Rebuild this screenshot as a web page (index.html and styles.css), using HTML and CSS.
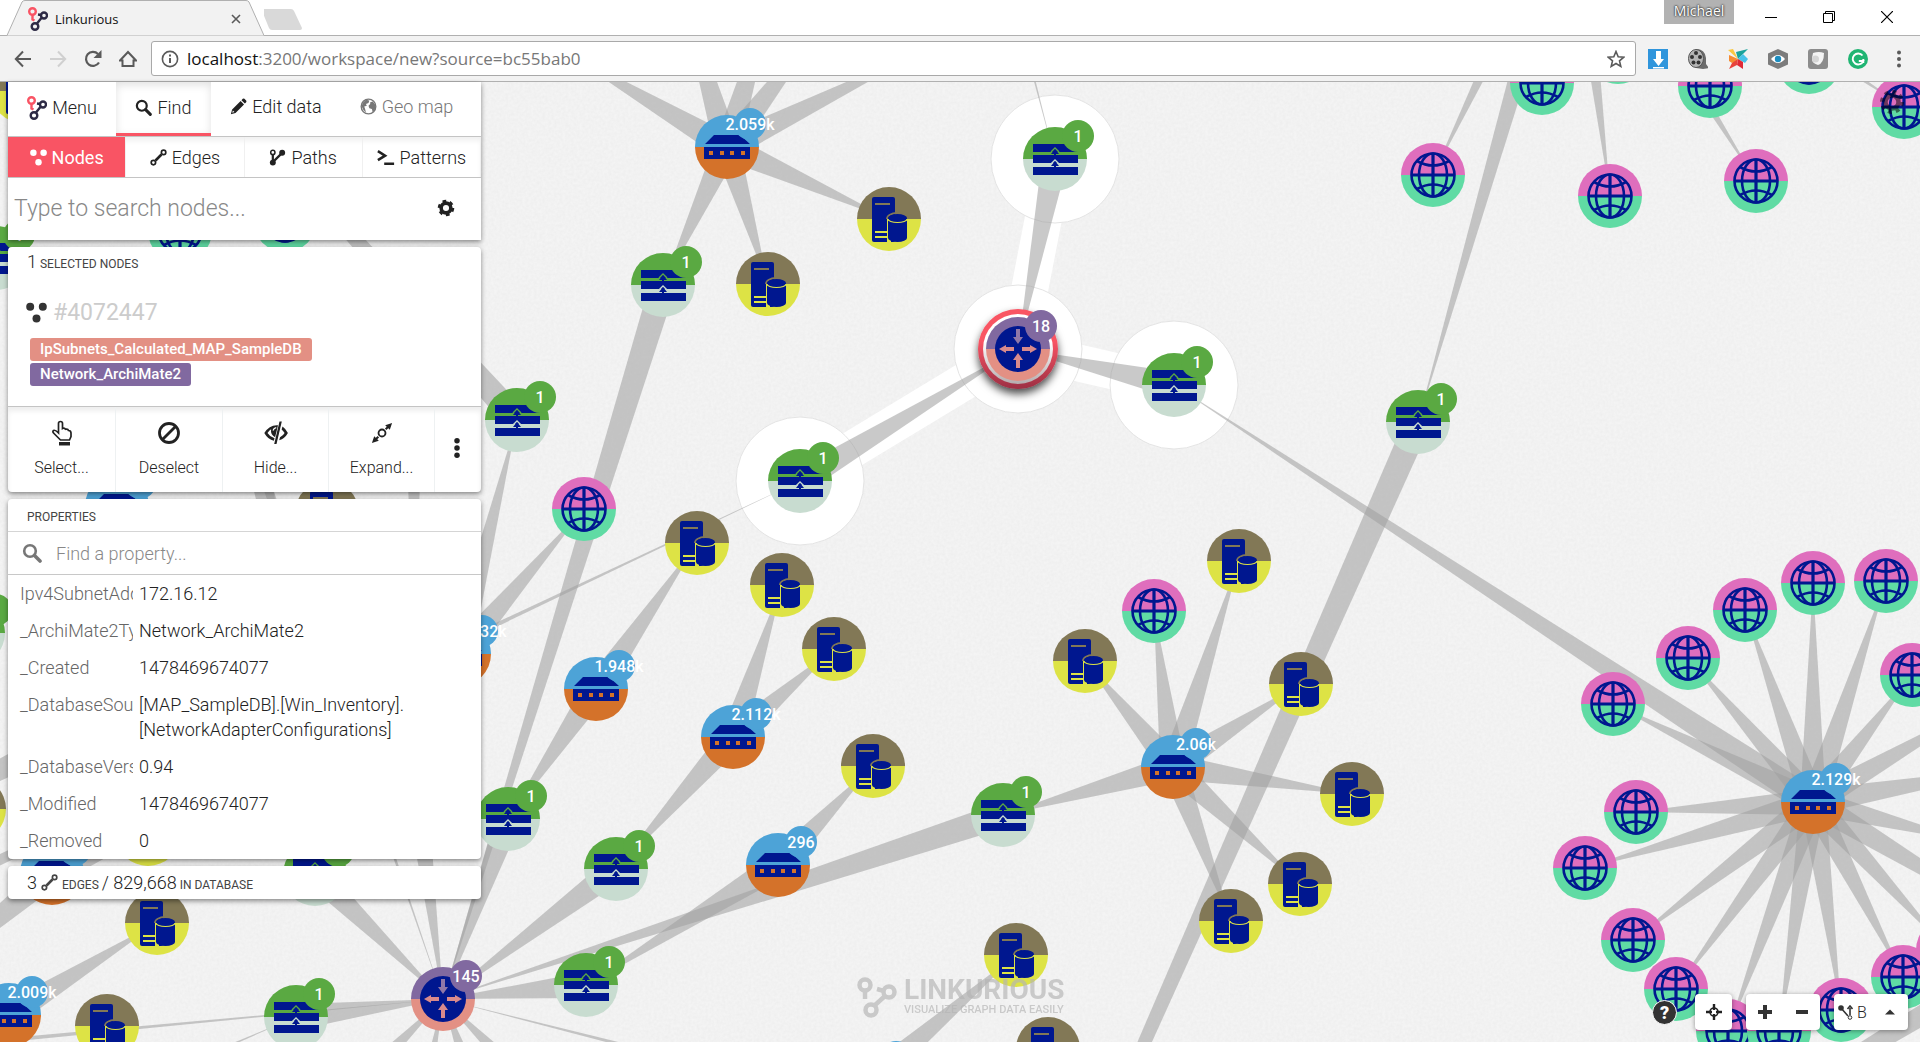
FILE: index.html
```
<!DOCTYPE html>
<html lang="en">
<head>
<meta charset="utf-8">
<title>Linkurious</title>
<link rel="stylesheet" href="styles.css">
</head>
<body>
<svg class="defs" aria-hidden="true">
  <defs>
    <symbol id="logo" viewBox="0 0 20 24">
      <g fill="none" stroke-width="2.4">
        <circle cx="4.500" cy="4.500" r="3.300" stroke="#f95464"/><path d="M4.500 8v4.500l2 1" stroke="#f95464"/>
        <circle cx="16" cy="8.500" r="3" stroke="#2d2a45"/><circle cx="7" cy="19.500" r="3.300" stroke="#2d2a45"/>
        <path d="M13.800 10.500 9 16.500M10 7.500l3 .5" stroke="#2d2a45"/>
      </g>
    </symbol>
    <symbol id="ic-search" viewBox="0 0 20 20"><circle cx="8" cy="8" r="5.800" fill="none" stroke="currentColor" stroke-width="2.600"/><path d="M12.500 12.500 18 18" stroke="currentColor" stroke-width="3.600" stroke-linecap="round"/></symbol>
    <symbol id="ic-pencil" viewBox="0 0 20 20"><path d="M1 19l1.500-5.500L12.500 3.500l4 4L6.500 17.500zM13.500 2.500l1.500-1.500q1-.8 2 0l2 2q.8 1 0 2L17.500 6.500z" fill="currentColor"/><path d="M2.600 17.400l.8-2.600 1.800 1.800z" fill="#fff"/></symbol>
    <symbol id="ic-earth" viewBox="0 0 20 20"><circle cx="10" cy="10" r="8.600" fill="none" stroke="currentColor" stroke-width="1.600"/><path d="M3 6l4-4 4 1-1 3-3 1 1 2-3 1 1 3 1 4-3-3-2-4zM12 5l3-1 3 4v5l-3 4-1-4-3-1-1-3 2-2z" fill="currentColor"/></symbol>
    <symbol id="ic-nodes" viewBox="0 0 20 20"><g fill="currentColor"><circle cx="4" cy="4.500" r="3.800"/><circle cx="16" cy="4.500" r="3.800"/><circle cx="10" cy="15.700" r="3.800"/></g></symbol>
    <symbol id="ic-edge" viewBox="0 0 20 20"><g fill="none" stroke="currentColor"><circle cx="4" cy="16" r="2.600" stroke-width="2"/><circle cx="16" cy="4" r="2.600" stroke-width="2"/><path d="M6.500 13.500l7-7" stroke-width="3"/></g></symbol>
    <symbol id="ic-path" viewBox="0 0 20 20"><g stroke="currentColor" fill="none" stroke-width="1.800"><circle cx="4.500" cy="4" r="2.500"/><path d="M4.500 7v8M6 14l8-8" stroke-width="2.600"/></g><g fill="currentColor"><circle cx="4.500" cy="16" r="3.500"/><circle cx="15.500" cy="4.500" r="3.500"/></g></symbol>
    <symbol id="ic-prompt" viewBox="0 0 20 20"><path d="M1 3.500l8 5-8 5M8 17.500h11" fill="none" stroke="currentColor" stroke-width="2.800"/></symbol>
    <symbol id="ic-gear" viewBox="0 0 20 20"><circle cx="10" cy="10" r="5.400" fill="none" stroke="currentColor" stroke-width="4"/><circle cx="10" cy="10" r="7.700" fill="none" stroke="currentColor" stroke-width="3" stroke-dasharray="4.030 4.030"/></symbol>
    <symbol id="ic-cog8" viewBox="0 0 26 26"><circle cx="13" cy="13" r="6.500" fill="none" stroke="currentColor" stroke-width="4.500"/><circle cx="13" cy="13" r="10" fill="none" stroke="currentColor" stroke-width="4" stroke-dasharray="3.930 3.924"/></symbol>
    <symbol id="ic-hand" viewBox="0 0 24 26"><path d="M8.500 13V3.500a2 2 0 0 1 4 0V8.500q2-1 3 .7 2.500-.6 3 1.300 2.500 0 2.500 2.500v3.500L19.500 20h-9L4 13.500q-2-2-.5-3 1.500-1 5 2.500z" fill="none" stroke="currentColor" stroke-width="1.700"/><path d="M9 22h11v3.500H9z" fill="currentColor"/></symbol>
    <symbol id="ic-ban" viewBox="0 0 24 24"><g fill="none" stroke="currentColor" stroke-width="2.800"><circle cx="12" cy="12" r="9.500"/><path d="M18.500 5.500l-13 13"/></g></symbol>
    <symbol id="ic-hide" viewBox="0 0 24 24"><path d="M15.500.5h2.300L12.500 23h-2.300z" fill="currentColor"/><path d="M14 4.200Q5.500 3.500.3 12q3.600 6.500 9.600 7.800l.6-2.500Q6 16 3.500 12q1.700-2.500 3.600-3.800-.8 5.500 4 8z" fill="currentColor"/><path d="M9 9.500q.8-2.500 3.200-2.800" fill="none" stroke="#fff" stroke-width="1.200"/><path d="M18.500 5.500Q22 8 23.900 12q-3 5.500-8.700 7.300l.8-3q3-1.500 4.600-4.300-1.200-2-3-3.500z" fill="currentColor"/></symbol>
    <symbol id="ic-expand" viewBox="0 0 24 24"><circle cx="12" cy="12" r="3.800" fill="none" stroke="currentColor" stroke-width="2"/><path d="M16 8l4-4M8 16l-4 4" stroke="currentColor" stroke-width="2.200"/><path d="M15.500 3.500L23 1 20.500 8.500zM8.500 20.500L1 23 3.500 15.500z" fill="currentColor"/></symbol>
    <symbol id="ic-dots" viewBox="0 0 8 24"><g fill="currentColor"><circle cx="4" cy="4" r="3"/><circle cx="4" cy="12" r="3"/><circle cx="4" cy="20" r="3"/></g></symbol>
    <symbol id="ic-target" viewBox="0 0 18 18"><circle cx="9" cy="9" r="4" fill="none" stroke="currentColor" stroke-width="1.600"/><path d="M9 1v6M9 11v6M1 9h6M11 9h6" stroke="currentColor" stroke-width="2.400"/></symbol>

    <g id="n-green"><path d="M-32 0a32 32 0 0 1 64 0z" fill="#5aa942"/><path d="M-32 0a32 32 0 0 0 64 0z" fill="#c8dcd0"/>
      <path d="M-22-15h45v8h-45zM-22-4h45v8h-45zM-22 8h45v8h-45z" fill="#00178f"/>
      <path d="M-4-7L0-11l4 4" fill="none" stroke="#5aa942" stroke-width="1.500"/><path d="M-4 5L0 1l4 4" fill="none" stroke="#c8dcd0" stroke-width="1.500"/>
      <path d="M0-10l4 5h-3v3h-2v-3h-3zM0 2l4 5h-3v3h-2v-3h-3z" fill="#00178f"/></g>
    <g id="n-blue"><path d="M-32 0a32 32 0 0 1 64 0z" fill="#4da3d7"/><path d="M-32 0a32 32 0 0 0 64 0z" fill="#d4722a"/>
      <path d="M-13-12h26l10 9h-45zM-23 0h46v12h-46z" fill="#00178f"/><path d="M-18 4h4v4h-4zM-7 4h4v4h-4zM3 4h4v4h-4zM14 4h4v4h-4z" fill="#d4722a"/></g>
    <g id="n-server"><path d="M-32 0a32 32 0 0 1 64 0z" fill="#827856"/><path d="M-32 0a32 32 0 0 0 64 0z" fill="#dde345"/>
      <rect x="-17" y="-22" width="23" height="45" rx="2" fill="#00178f"/><path d="M-14-15h15" stroke="#827856" stroke-width="2"/><path d="M-14 13h13M-14 18h13" stroke="#dde345" stroke-width="2"/>
      <path d="M-2 0v23h4V0z" fill="#dde345"/><path d="M-2 0a10 6 0 0 1 10-6" stroke="#827856" stroke-width="2" fill="none"/>
      <path d="M-1-1a9.500 4 0 0 1 19 0v20a9.500 4 0 0 1-19 0z" fill="#00178f"/><path d="M-1 0a9.500 3.500 0 0 0 19 0" fill="none" stroke="#dde345" stroke-width="1.200"/></g>
    <g id="n-globe"><path d="M-32 0a32 32 0 0 1 64 0z" fill="#df6ebd"/><path d="M-32 0a32 32 0 0 0 64 0z" fill="#60dba4"/>
      <g fill="none" stroke="#00178f" stroke-width="2.600"><circle r="21.500"/><ellipse rx="14" ry="21.500"/><path d="M-22 0h44M0-22v44" stroke-width="3.200"/><path d="M-16-14q16 9 32 0M-16 14q16-9 32 0"/></g></g>
    <g id="n-router"><path d="M-32 0a32 32 0 0 1 64 0z" fill="#8169a0"/><path d="M-32 0a32 32 0 0 0 64 0z" fill="#e39084"/>
      <circle r="23" fill="#00178f"/><path d="M-2-20h4v8h3L0-5l-5-7h3z" fill="#8f77a8"/><path d="M-2 19h4v-8h3L0 4l-5 7h3zM-19 0l7-4v2h8v4h-8v2zM19 0l-7-4v2h-8v4h8v2z" fill="#d98a8c"/></g>
    <linearGradient id="ring" x1="0" y1="0" x2="0" y2="1"><stop offset=".4" stop-color="#f95464"/><stop offset="1" stop-color="#9c2f43"/></linearGradient>
    <linearGradient id="inring" x1="0" y1="0" x2="0" y2="1"><stop offset=".4" stop-color="#fff"/><stop offset="1" stop-color="#b5acae"/></linearGradient>
    <filter id="drop" x="-30%" y="-30%" width="160%" height="170%"><feDropShadow dx="0" dy="5" stdDeviation="4" flood-color="#000" flood-opacity=".7"/></filter>
    <filter id="paper" x="0" y="0" width="100%" height="100%"><feTurbulence type="fractalNoise" baseFrequency=".35" numOctaves="2" seed="4"/><feColorMatrix values="0 0 0 0 .5  0 0 0 0 .5  0 0 0 0 .5  .16 0 0 0 -.035"/></filter>
  </defs>
</svg>

<header class="browser">
  <div class="tabstrip">
    <div class="tab">
      <svg class="tab-shape" viewBox="0 0 264 36" width="264" height="36"><path d="M0 35.500h7L22 2q1-1.500 3-1.500h221q2 0 3 1.500l15 33.500" fill="#f2f2f2" stroke="#b0b0b0"/></svg>
      <svg width="20" height="24"><use href="#logo"/></svg>
      <span class="tab-title">Linkurious</span>
      <button class="tab-close" aria-label="Close tab"><svg width="10" height="10"><path d="M1 1l8 8M9 1L1 9" stroke="#5a5a5a" stroke-width="1.600"/></svg></button>
    </div>
    <svg class="newtab" width="44" height="36"><path d="M0 9h27q2 0 3 2l8 17q0 2-2 2H8q-2 0-3-2L-2 11q0-2 2-2z" fill="#d9d9d9"/></svg>
    <div class="window">
      <span class="profile">Michael</span>
      <button aria-label="Minimize"><svg width="12" height="12"><path d="M0 6.500h12" stroke="#000"/></svg></button>
      <button aria-label="Restore"><svg width="12" height="12"><path d="M.5 2.500h9v9h-9zM2.500 2V.5h9v9H10" fill="none" stroke="#000"/></svg></button>
      <button aria-label="Close"><svg width="12" height="12"><path d="M0 0l12 12M12 0L0 12" stroke="#000" stroke-width="1.200"/></svg></button>
    </div>
  </div>
  <div class="toolbar">
    <button aria-label="Back"><svg width="18" height="18"><path d="M17 9H2M9 1.500L1.800 9 9 16.500" fill="none" stroke="#5a5a5a" stroke-width="2"/></svg></button>
    <button aria-label="Forward"><svg width="18" height="18"><path d="M1 9h15M9 1.500L16.200 9 9 16.500" fill="none" stroke="#d0d0d0" stroke-width="2"/></svg></button>
    <button aria-label="Reload"><svg width="18" height="18"><path d="M15 12.500A7 7 0 1 1 14 4" fill="none" stroke="#5a5a5a" stroke-width="2.200"/><path d="M17.500 0v8h-8z" fill="#5a5a5a"/></svg></button>
    <button aria-label="Home"><svg width="18" height="18"><path d="M1 10.500L9 2l8 8.500h-2.500V16h-11v-5.500z" fill="none" stroke="#5a5a5a" stroke-width="2"/></svg></button>
    <div class="address">
      <svg width="18" height="18"><circle cx="9" cy="9" r="7.600" fill="none" stroke="#5a5a5a" stroke-width="1.600"/><path d="M9 8v5M9 4.500v2" stroke="#5a5a5a" stroke-width="2"/></svg>
      <span class="url"><b>localhost</b>:3200/workspace/new?source=bc55bab0</span>
      <svg width="18" height="18"><path d="M9 1.500l2.200 5.200 5.600.5-4.300 3.700 1.300 5.500L9 13.500l-4.800 2.900 1.300-5.500L1.200 7.200l5.600-.5z" fill="none" stroke="#5a5a5a" stroke-width="1.600"/></svg>
    </div>
    <div class="extensions">
      <svg width="20" height="20"><path d="M0 0h20v20H0z" fill="#2f95dc"/><path d="M8 2h5v8h3l-5.500 7L5 10h3zM5 18h11v1.500H5z" fill="#fff"/></svg>
      <svg width="20" height="20"><path d="M8 0q9 0 10 9v6l3 4-6 1-7-1z" fill="#6c6c6c"/><ellipse cx="8" cy="9.500" rx="7.500" ry="9" fill="#b5b5b5" stroke="#555"/><g fill="#333"><circle cx="8" cy="4" r="2"/><circle cx="4" cy="8" r="2"/><circle cx="12" cy="8" r="2"/><circle cx="5.500" cy="13.500" r="2"/><circle cx="10.500" cy="13.500" r="2"/></g></svg>
      <svg width="20" height="20"><path d="M0 1l5-1 5 10z" fill="#f9c842"/><path d="M8 3l12-3-10 10z" fill="#1ba39b"/><path d="M10 10l5-5 5 5-3 4z" fill="#48c3ea"/><path d="M10 10l5 3 0 7-6-4z" fill="#e02a38"/><path d="M10 10L9 16l-8 4 4-8z" fill="#e8443c"/><path d="M10 10L1 6v6l3 2z" fill="#f58b31"/></svg>
      <svg width="20" height="20"><path d="M10 0l10 4.500v11L10 20 0 15.500v-11z" fill="#7c7c7c"/><path d="M3 10q7-8 14 0-7 8-14 0z" fill="#fff"/><circle cx="10" cy="10" r="3.200" fill="#1c8dc0"/></svg>
      <svg width="20" height="20"><rect width="20" height="20" rx="3" fill="#8c8c8c"/><path d="M5 4q6-2 11 0 0 10-6 12-7-2-6-7z" fill="#f4f4f4"/><circle cx="7.500" cy="10" r="3.500" fill="#d5d5d5"/></svg>
      <svg width="20" height="20"><circle cx="10" cy="10" r="10" fill="#20b573"/><path d="M14.500 6.500a5.500 5.500 0 1 0 .8 5.500h-4.500M15.300 10v4" fill="none" stroke="#fff" stroke-width="1.900"/></svg>
      <svg width="20" height="20"><g fill="#5a5a5a"><circle cx="11" cy="3.500" r="2"/><circle cx="11" cy="10" r="2"/><circle cx="11" cy="16.500" r="2"/></g></svg>
    </div>
  </div>
</header>

<main class="workspace">
  <svg class="graph" id="graph" role="img" aria-label="Network graph">
    <rect width="100%" height="100%" fill="#f4f4f4"/>
    <rect width="100%" height="100%" filter="url(#paper)"/>
    <g id="scene" transform="translate(0 -82)"></g>
  </svg>

  <div class="watermark">
    <svg width="40" height="42" viewBox="0 0 40 42"><g fill="none" stroke="currentColor" stroke-width="4.500"><circle cx="8" cy="9" r="5.500"/><path d="M8 15v8"/><circle cx="32" cy="16" r="5.500"/><path d="M28 20L17 30M20 13l7 2"/><circle cx="14" cy="34" r="5.500"/></g></svg>
    <div><strong>LINKURIOUS</strong><span>VISUALIZE GRAPH DATA EASILY</span></div>
  </div>

  <aside class="sidebar">
    <section class="card finder">
      <nav class="tabs">
        <button class="t-menu"><svg width="20" height="24"><use href="#logo"/></svg>Menu</button>
        <button class="t-find active"><svg width="17" height="17"><use href="#ic-search"/></svg>Find</button>
        <button class="t-edit"><svg width="17" height="17"><use href="#ic-pencil"/></svg>Edit data</button>
        <button class="t-geo"><svg width="17" height="17"><use href="#ic-earth"/></svg>Geo map</button>
      </nav>
      <nav class="subtabs">
        <button class="active"><svg width="17" height="17"><use href="#ic-nodes"/></svg>Nodes</button>
        <button><svg width="17" height="17"><use href="#ic-edge"/></svg>Edges</button>
        <button><svg width="17" height="17"><use href="#ic-path"/></svg>Paths</button>
        <button><svg width="18" height="18"><use href="#ic-prompt"/></svg>Patterns</button>
      </nav>
      <div class="search">
        <input type="text" placeholder="Type to search nodes..." aria-label="Search nodes">
        <button aria-label="Search options"><svg width="18" height="18"><use href="#ic-gear"/></svg></button>
      </div>
    </section>

    <section class="card selection">
      <h2 class="caps"><b>1</b> selected nodes</h2>
      <h3 class="node-title"><svg width="21" height="21"><use href="#ic-nodes"/></svg>#4072447</h3>
      <ul class="tags">
        <li class="tag tag-subnet">IpSubnets_Calculated_MAP_SampleDB</li>
        <li class="tag tag-network">Network_ArchiMate2</li>
      </ul>
      <div class="actions">
        <button><svg width="24" height="26"><use href="#ic-hand"/></svg>Select...</button>
        <button><svg width="24" height="26"><use href="#ic-ban"/></svg>Deselect</button>
        <button><svg width="24" height="26"><use href="#ic-hide"/></svg>Hide...</button>
        <button><svg width="22" height="26"><use href="#ic-expand"/></svg>Expand...</button>
        <button aria-label="More actions"><svg width="8" height="22"><use href="#ic-dots"/></svg></button>
      </div>
    </section>

    <section class="card properties">
      <h2 class="caps">properties</h2>
      <label class="prop-search"><svg width="20" height="20"><use href="#ic-search"/></svg><input type="text" placeholder="Find a property..."></label>
      <table>
        <tr><th>Ipv4SubnetAddress</th><td>172.16.12</td></tr>
        <tr><th>_ArchiMate2Type</th><td>Network_ArchiMate2</td></tr>
        <tr><th>_Created</th><td>1478469674077</td></tr>
        <tr><th>_DatabaseSource</th><td>[MAP_SampleDB].[Win_Inventory].<br>[NetworkAdapterConfigurations]</td></tr>
        <tr><th>_DatabaseVersion</th><td>0.94</td></tr>
        <tr><th>_Modified</th><td>1478469674077</td></tr>
        <tr><th>_Removed</th><td>0</td></tr>
      </table>
    </section>

    <section class="card totals caps"><b>3</b><svg width="17" height="17"><use href="#ic-edge"/></svg><span>edges <b>/ 829,668</b> in database</span></section>
  </aside>

  <button class="settings" aria-label="Settings"><svg width="26" height="26"><use href="#ic-cog8"/></svg></button>

  <div class="controls">
    <button class="help" aria-label="Help">?</button>
    <div class="group"><button aria-label="Center"><svg width="18" height="18"><use href="#ic-target"/></svg></button></div>
    <div class="group">
      <button aria-label="Zoom in"><svg width="14" height="14"><path d="M7 0v14M0 7h14" stroke="#333" stroke-width="4"/></svg></button>
      <button aria-label="Zoom out"><svg width="14" height="14"><path d="M1 7h12" stroke="#333" stroke-width="4"/></svg></button>
    </div>
    <div class="group layout">
      <button><svg width="15" height="15"><circle cx="3" cy="3" r="2.800" fill="#333"/><path d="M3 3l7 8M12 3v7M9.500 4L12 1l2.500 3" fill="none" stroke="#333" stroke-width="1.600"/><circle cx="12" cy="12.500" r="1.800" fill="none" stroke="#333"/></svg>B</button>
      <button aria-label="Choose layout"><svg width="10" height="6"><path d="M0 5.500L5 .5l5 5z" fill="#333"/></svg></button>
    </div>
  </div>
</main>
<script src="graph.js"></script>
</body>
</html>
```
FILE: styles.css
```
* { box-sizing: border-box; }
html, body { height: 100%; }
body { margin: 0; display: flex; flex-direction: column; overflow: hidden; font-family: Roboto, "Liberation Sans", sans-serif; font-size: 18px; font-weight: 300; color: #222; }
button { border: 0; padding: 0; background: none; font: inherit; color: inherit; display: flex; align-items: center; justify-content: center; }
input { border: 0; outline: 0; background: none; font: inherit; color: inherit; min-width: 0; padding: 0; }
svg { flex: none; display: block; }
h2, h3, ul { margin: 0; padding: 0; font-weight: inherit; list-style: none; }
.defs { position: absolute; width: 0; height: 0; }

/* browser frame */
.browser { font-family: "Open Sans", "Noto Sans", sans-serif; font-weight: 400; flex: none; background: #f2f2f2; }
.tabstrip { height: 36px; display: flex; padding-right: 4px; background: #fff; border-bottom: 1px solid #b0b0b0; }
.tab { position: relative; width: 264px; height: 36px; display: flex; align-items: center; padding: 2px 23px 0 28px; }
.tab > * { position: relative; }
.tab .tab-shape { position: absolute; left: 0; top: 0; }
.tab-title { flex: 1; margin-left: 7px; font-size: 13px; color: #111; }
.window { margin-left: auto; display: flex; align-items: flex-start; }
.profile { width: 70px; height: 24px; margin-right: 8px; background: #b2b2b2; color: #fff; font-size: 14px; line-height: 22px; text-align: center; text-shadow: 0 0 2px #222, 0 0 2px #222; }
.window button { width: 58px; height: 34px; }
.toolbar { height: 46px; display: flex; align-items: center; padding: 0 12px 0 14px; border-bottom: 1px solid #b0b0b0; }
.toolbar > button { width: 18px; margin-right: 17px; }
.toolbar > button:nth-child(4) { margin-right: 14px; }
.address { flex: 1; height: 35px; margin-right: 12px; padding: 0 10px 0 9px; display: flex; align-items: center; gap: 8px; background: #fff; border: 1px solid #a9a9a9; border-radius: 3px; }
.url { flex: 1; font-size: 17px; color: #777; }
.url b { font-weight: 400; color: #111; }
.extensions { display: flex; gap: 20px; }

/* workspace */
.workspace { position: relative; flex: 1; min-height: 0; }
.graph { position: absolute; inset: 0; width: 100%; height: 100%; }
.badge-text { font: 500 16px Roboto, sans-serif; fill: #fff; text-anchor: middle; }
.watermark { position: absolute; left: 857px; bottom: 24px; display: flex; gap: 7px; color: #b4b4b4; opacity: .65; }
.watermark strong { display: block; font-size: 28px; line-height: 28px; font-weight: 700; }
.watermark span { display: block; font-size: 11px; line-height: 12px; font-weight: 500; }

.sidebar { position: relative; width: 473px; margin-left: 8px; display: flex; flex-direction: column; gap: 7px; }
.card { background: #fff; border-radius: 4px; box-shadow: 0 2px 5px rgba(0,0,0,.45); }
.finder { border-radius: 0; }
.caps { text-transform: uppercase; font-size: 12px; font-weight: 400; color: #444; }
.caps b { font-size: 18px; line-height: 1; font-weight: 300; color: #222; }

.tabs { display: flex; height: 55px; border-bottom: 1px solid #c4c4c4; }
.tabs button { gap: 5px; padding-bottom: 3px; }
.tabs .t-menu { width: 108px; }
.tabs .t-find { width: 95px; }
.tabs .t-edit { width: 130px; padding-bottom: 5px; }
.tabs .t-geo { flex: 1; padding: 0 9px 5px 0; color: #777; }
.tabs .active { border-bottom: 3px solid #f95464; padding-bottom: 0; box-shadow: inset 0 3px 8px rgba(0,0,0,.12); }
.subtabs { display: flex; height: 41px; border-bottom: 1px solid #c4c4c4; box-shadow: inset 0 4px 5px rgba(0,0,0,.06); }
.subtabs button { flex: 1; gap: 5px; border-right: 1px solid #f0f0f0; }
.subtabs .active { background: #f95464; color: #fff; font-weight: 400; }
.search { display: flex; align-items: center; height: 62px; padding: 0 26px 2px 6px; }
.search input { flex: 1; font-size: 23px; }
input::placeholder { color: #888; opacity: 1; }

.selection h2 { height: 30px; padding: 5px 19px 0; line-height: 24px; }
.node-title { display: flex; align-items: center; gap: 6px; padding: 10px 18px 0; height: 60px; font-size: 23px; font-weight: 400; color: #ccc; }
.node-title svg { color: #333; }
.tags { display: flex; flex-direction: column; align-items: flex-start; gap: 2px; padding: 1px 22px 20px; }
.tag { height: 23px; padding: 0 10px; border-radius: 3px; color: #fff; font-size: 15px; font-weight: 500; line-height: 23px; }
.tag-subnet { background: #e39084; }
.tag-network { background: #8169a0; }
.actions { display: grid; grid-template-columns: 108px 107px 106px 106px 1fr; height: 86px; border-top: 1px solid #c4c4c4; box-shadow: inset 0 4px 5px rgba(0,0,0,.07); }
.actions button { flex-direction: column; gap: 12px; padding-bottom: 2px; font-size: 16px; border-right: 1px solid #eef1f2; }
.actions button:last-child { border: 0; padding: 0 2px 4px 0; }

.properties h2 { padding: 4px 19px 0; line-height: 28px; border-bottom: 1px solid #d5d5d5; }
.prop-search { display: flex; align-items: center; height: 43px; padding-left: 14px; gap: 14px; border-bottom: 1px solid #c8c8c8; color: #777; }
.prop-search input { flex: 1; }
table { width: 100%; table-layout: fixed; border-collapse: collapse; }
th { width: 125px; padding: 6px 0 6px 12px; overflow: hidden; white-space: nowrap; text-align: left; vertical-align: top; font-weight: 300; line-height: 25px; color: #666; }
td { padding: 6px 0 6px 6px; line-height: 25px; vertical-align: top; }
.totals { display: flex; align-items: center; gap: 4px; height: 33px; padding: 0 19px; }

.settings { position: absolute; right: 15px; top: 7px; color: #000; opacity: .5; }
.controls { position: absolute; right: 12px; bottom: 12px; display: flex; align-items: center; gap: 14px; }
.help { width: 25px; height: 25px; margin-right: 4px; border: 1px solid #fff; border-radius: 50%; background: #333; color: #fff; font-size: 18px; font-weight: 900; }
.group { display: flex; height: 36px; border-radius: 4px; background: #fff; box-shadow: 0 1px 5px rgba(0,0,0,.4); }
.group button { width: 37px; gap: 4px; font-size: 16px; }
```
FILE: graph.js
```
const nodes = [
  // blue switches
  ['blue', 727, 147, '2.059k'], ['blue', 596, 689, '1.948k'], ['blue', 733, 737, '2.112k'],
  ['blue', 778, 865, '296'], ['blue', 1173, 767, '2.06k'], ['blue', 1813, 802, '2.129k'],
  ['blue', 9, 1015, '2.009k'], ['blue', 459, 654, '2.032k'], ['blue', 52, 873, ''],
  ['blue', 117, 506, ''], ['blue', 873, 1080, ''],
  // servers
  ['server', 889, 219], ['server', 768, 284], ['server', 697, 543], ['server', 782, 585],
  ['server', 834, 649], ['server', 873, 766], ['server', 1016, 955], ['server', 1048, 1049],
  ['server', 1085, 661], ['server', 1239, 561], ['server', 1301, 684], ['server', 1352, 794],
  ['server', 1300, 884], ['server', 1231, 921], ['server', 157, 923], ['server', 107, 1026],
  ['server', 148, 834], ['server', -26, 809], ['server', 23, 91], ['server', 327, 513],
  // globes
  ['globe', 584, 509], ['globe', 1154, 611], ['globe', 1433, 175], ['globe', 1610, 196],
  ['globe', 1756, 181], ['globe', 1542, 83], ['globe', 1710, 86], ['globe', 1809, 62],
  ['globe', 1618, 52], ['globe', 1904, 107], ['globe', 1613, 704], ['globe', 1688, 658],
  ['globe', 1745, 610], ['globe', 1813, 583], ['globe', 1886, 581], ['globe', 1912, 675],
  ['globe', 1636, 812], ['globe', 1585, 868], ['globe', 1633, 940], ['globe', 1676, 989],
  ['globe', 1728, 1031], ['globe', 1779, 1031], ['globe', 1841, 1010], ['globe', 1948, 950],
  ['globe', 1903, 977], ['globe', 180, 231], ['globe', 285, 220],
  // subnets
  ['green', 663, 285, '1'], ['green', 517, 420, '1'], ['green', 800, 481, '1'],
  ['green', 1055, 159, '1'], ['green', 1174, 385, '1'], ['green', 1418, 422, '1'],
  ['green', 508, 819, '1'], ['green', 616, 869, '1'], ['green', 586, 985, '1'],
  ['green', 1003, 815, '1'], ['green', 296, 1017, '1'], ['green', 315, 874, '1'],
  ['green', -4, 258, '1'], ['green', -27, 633, ''],
  // routers
  ['router', 443, 999, '145']
];

// x/y of the wide end, then x/y of the pointed end
const edges = [
  [727,147,559,48], [727,147,671,-44], [727,147,785,-50], [727,147,846,-8], [727,147,933,45],
  [727,147,889,219], [727,147,768,284], [727,147,663,285], [663,285,443,999],
  [517,420,150,10], [459,654,517,420], [459,654,584,509], [-1200,1428,800,481],
  [596,689,697,543], [596,689,508,819], [508,819,443,999], [733,737,782,585],
  [733,737,834,649], [733,737,616,869], [616,869,443,999], [778,865,873,766],
  [778,865,586,985], [586,985,443,999], [1003,815,443,999], [1173,767,1003,815],
  [1173,767,1085,661], [1173,767,1154,611], [1173,767,1239,561], [1173,767,1301,684],
  [1173,767,1352,794], [1173,767,1300,884], [1173,767,1231,921],
  [1055,159,1018,349], [800,481,1018,349], [1174,385,1018,349], [730,-1090,1055,159],
  [1813,802,1174,385], [1418,422,859,1690],
  [1572,-113,1433,175], [1572,-113,1610,196], [1572,-113,1756,181], [1572,-113,1904,107], [1572,-113,1418,422],
  [1813,802,1990,700], [1813,802,2030,765], [1813,802,1975,843], [1813,802,2050,945], [1813,802,1948,950],
  [2050,938,1500,1270], [873,1078,1016,955],
  [9,1015,157,923], [52,873,148,834], [52,873,-150,1040], [60,740,-200,870], [315,874,443,999],
  [296,1017,443,999], [413,765,443,999], [-50,-440,443,999], [-2350,1262,443,999],
  [1900,1370,443,999], [330,1112,443,999], [405,1200,443,999], [490,1130,443,999], [560,1115,443,999],
  [-600,1400,296,1017], [240,380,330,800], [414,300,414,640]
];
const hub = [1813, 802];
for (const [x, y] of [[1613,704],[1688,658],[1745,610],[1813,583],[1886,581],[1912,675],[1636,812],
  [1585,868],[1633,940],[1676,989],[1728,1031],[1779,1031],[1841,1010],[1903,977]]) {
  edges.push([...hub, x, y]);
}

const badgeFill = { blue: '#4da3d7', green: '#5aa942', router: '#8169a0' };
const focus = [1018, 349];
const neighbours = [[1055, 159], [800, 481], [1174, 385]];
let out = '';

for (const [x, y] of neighbours) {
  out += `<path d="M${focus}L${x} ${y}" stroke="#fff" stroke-width="37"/>`;
}
for (const [x, y] of [focus, ...neighbours]) {
  out += `<circle cx="${x}" cy="${y}" r="64" fill="#fff" stroke="#e4e4e4"/>`;
}
for (const [x1, y1, x2, y2] of edges) {
  const len = Math.hypot(x2 - x1, y2 - y1);
  const nx = (y2 - y1) / len * 13;
  const ny = (x1 - x2) / len * 13;
  out += `<path d="M${x1 + nx} ${y1 + ny}L${x2} ${y2}L${x1 - nx} ${y1 - ny}z" fill="#a0a0a0" fill-opacity=".57"/>`;
}

function drawNode(type, x, y, label) {
  let s = `<g transform="translate(${x} ${y})"><use href="#n-${type}"/>`;
  if (label !== undefined) {
    s += `<circle cx="23" cy="-23" r="16" fill="${badgeFill[type]}"/><text class="badge-text" x="23" y="-17">${label}</text>`;
  }
  return s + '</g>';
}
for (const n of nodes) out += drawNode(...n);

out += `<g transform="translate(${focus})"><circle r="40" fill="url(#ring)" filter="url(#drop)"/><circle r="35" fill="url(#inring)"/></g>`;
out += drawNode('router', ...focus, '18');
document.getElementById('scene').innerHTML = out;
```
